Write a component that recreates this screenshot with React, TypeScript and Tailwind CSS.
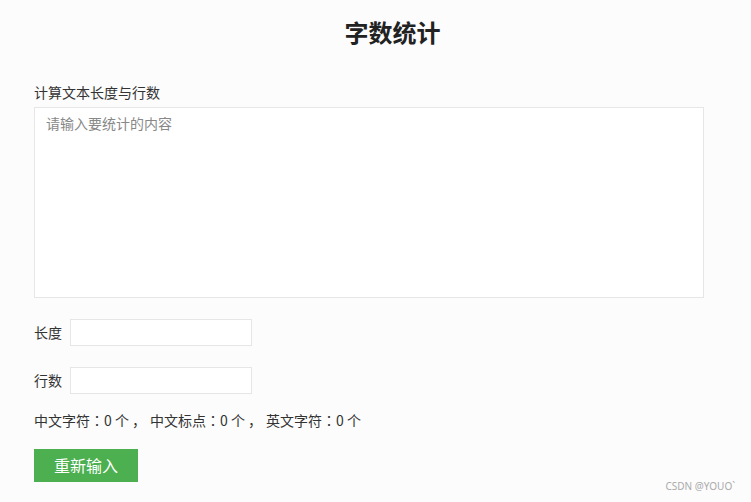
import React from "react";

export default function App() {
  const font = { fontFamily: '"Microsoft YaHei", "Noto Sans CJK SC", "Noto Sans", sans-serif' };
  const jp = { fontFamily: '"Noto Sans CJK JP", "Noto Sans CJK SC", sans-serif' };
  const Seg = ({ label, last }: { label: string; last?: boolean }) => (
    <>
      {label}
      <span style={jp}>：</span>0 个
      {last ? null : <span className="ml-[3px] mr-[1px]">， </span>}
    </>
  );
  return (
    <div className="relative w-[751px] h-[502px] bg-[#fcfcfc] text-[#333]" style={font}>
      <div className="pl-[34px]">
        <h1 className="pt-[16px] h-[48px] leading-[32px] text-[24px] font-bold text-center text-[#222] w-[717px]">字数统计</h1>
        <div className="mt-[34px] h-[20px] leading-[20px] text-[14px] text-[#333]">计算文本长度与行数</div>
        <textarea
          className="mt-[5px] block w-[670px] h-[191px] bg-white border border-[#e6e6e6] px-[11px] pt-[4px] pb-[6px] text-[14px] leading-[22px] resize-none outline-none placeholder:text-[#888]"
          placeholder="请输入要统计的内容"
        />
        <div className="mt-[21px] flex items-center gap-[8px] h-[27px]">
          <span className="text-[14px] w-[28px]">长度</span>
          <input className="w-[182px] h-[27px] bg-white border border-[#e6e6e6] outline-none" />
        </div>
        <div className="mt-[21px] flex items-center gap-[8px] h-[27px]">
          <span className="text-[14px] w-[28px]">行数</span>
          <input className="w-[182px] h-[27px] bg-white border border-[#e6e6e6] outline-none" />
        </div>
        <div className="mt-[16px] h-[20px] leading-[20px] text-[14px] text-[#333] whitespace-pre">
          <Seg label="中文字符" />
          <Seg label="中文标点" />
          <Seg label="英文字符" last />
        </div>
        <button className="mt-[19px] w-[104px] h-[33px] bg-[#4caf50] text-white text-[16px] leading-[33px]">
          重新输入
        </button>
      </div>
      <div
        className="absolute right-[16px] bottom-[8px] text-[10px] text-[#aaa]"
        style={{ fontFamily: '"Noto Sans", "DejaVu Sans", sans-serif' }}
      >
        CSDN @YOUO`
      </div>
    </div>
  );
}
